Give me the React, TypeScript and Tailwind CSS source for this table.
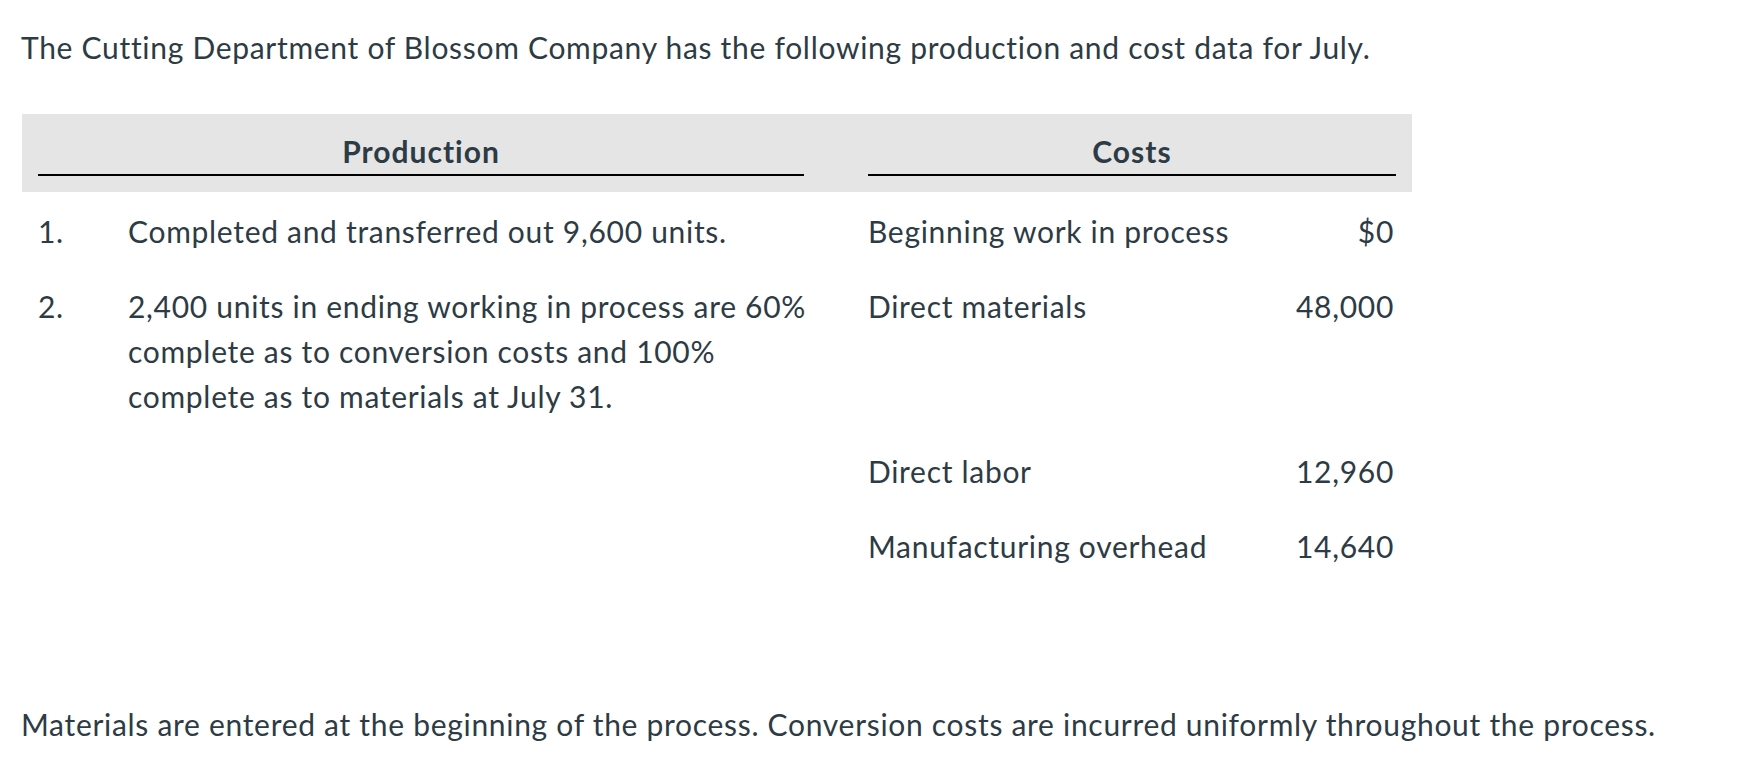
import React from "react";

const rows = [
  { num: "1.", text: ["Completed and transferred out 9,600 units."], label: "Beginning work in process", amount: "$0", pt: "pt-[17px]" },
  {
    num: "2.",
    text: [
      "2,400 units in ending working in process are 60%",
      "complete as to conversion costs and 100%",
      "complete as to materials at July 31.",
    ],
    label: "Direct materials",
    amount: "48,000",
    pt: "pt-[15px]",
  },
  { num: "", text: [], label: "Direct labor", amount: "12,960", pt: "pt-[15px]" },
  { num: "", text: [], label: "Manufacturing overhead", amount: "14,640", pt: "pt-[15px]" },
];

export default function App() {
  return (
    <div
      className="w-[1764px] h-[770px] bg-white text-[#2d3b45] text-[30px] leading-[45px] tracking-[0.7px] [font-variant-ligatures:none] pl-[21px] pt-[25px]"
      style={{ fontFamily: "Lato, 'Open Sans', sans-serif" }}
    >
      <p className="whitespace-nowrap">The Cutting Department of Blossom Company has the following production and cost data for July.</p>

      <div className="mt-[44px] ml-[1px] w-[1390px]">
        <div className="flex bg-[#e5e5e5] px-[16px] pt-[15px] pb-[16px]">
          <div className="w-[766px] border-b-2 border-black text-center font-bold tracking-[1px]">Production</div>
          <div className="w-[64px]" />
          <div className="w-[528px] border-b-2 border-black text-center font-bold tracking-[1px]">Costs</div>
        </div>

        {rows.map((r, i) => (
          <div key={i} className={`flex px-[16px] pb-[15px] ${r.pt}`}>
            <div className="w-[90px]">{r.num}</div>
            <div className="w-[676px]">
              {r.text.map((t, j) => (
                <div key={j} className="whitespace-nowrap">{t}</div>
              ))}
            </div>
            <div className="w-[64px]" />
            <div className="w-[528px] flex justify-between">
              <span className="whitespace-nowrap">{r.label}</span>
              <span className="pr-[2px] whitespace-nowrap">{r.amount}</span>
            </div>
          </div>
        ))}
      </div>

      <p className="mt-[118px] whitespace-nowrap">
        Materials are entered at the beginning of the process. Conversion costs are incurred uniformly throughout the process.
      </p>
    </div>
  );
}
